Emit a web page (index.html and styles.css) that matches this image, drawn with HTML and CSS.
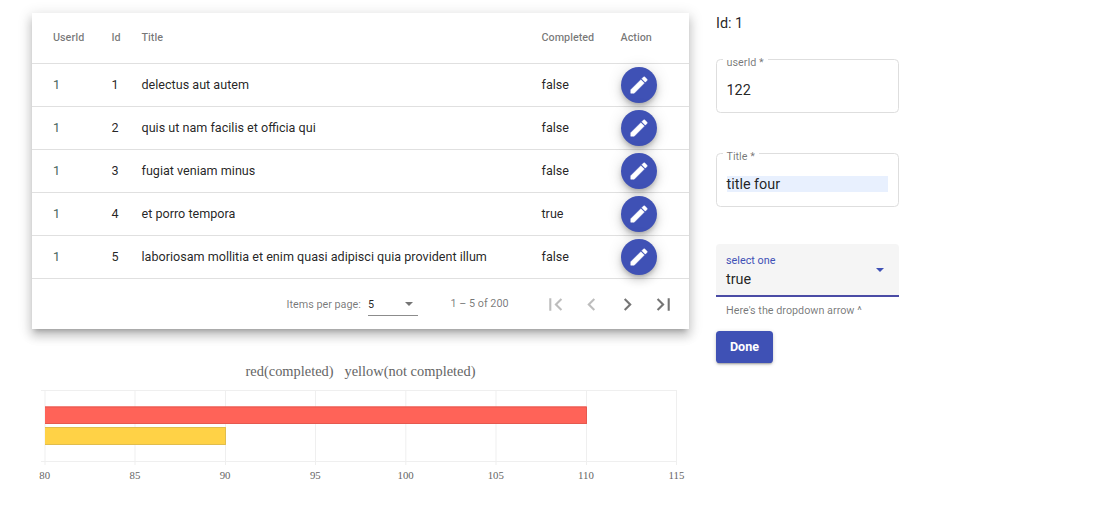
FILE: index.html
```html
<!DOCTYPE html>
<html lang="en">
<head>
<meta charset="utf-8">
<title>Todos</title>
<link rel="stylesheet" href="styles.css">
</head>
<body>
<svg class="defs" width="0" height="0">
  <symbol id="pencil" viewBox="0 0 24 24"><path d="M3 17.25V21h3.75L17.81 9.94l-3.75-3.75L3 17.25zM20.71 7.04c.39-.39.39-1.02 0-1.41l-2.34-2.34c-.39-.39-1.02-.39-1.41 0l-1.83 1.83 3.75 3.75 1.83-1.83z"/></symbol>
</svg>
<main class="page">
  <section class="left">
    <div class="card">
      <div class="row head"><span>UserId</span><span>Id</span><span>Title</span><span>Completed</span><span>Action</span></div>
      <div class="row"><span class="user">1</span><span>1</span><span>delectus aut autem</span><span>false</span><button class="fab" aria-label="Edit"><svg><use href="#pencil"/></svg></button></div>
      <div class="row"><span class="user">1</span><span>2</span><span>quis ut nam facilis et officia qui</span><span>false</span><button class="fab" aria-label="Edit"><svg><use href="#pencil"/></svg></button></div>
      <div class="row"><span class="user">1</span><span>3</span><span>fugiat veniam minus</span><span>false</span><button class="fab" aria-label="Edit"><svg><use href="#pencil"/></svg></button></div>
      <div class="row"><span class="user">1</span><span>4</span><span>et porro tempora</span><span>true</span><button class="fab" aria-label="Edit"><svg><use href="#pencil"/></svg></button></div>
      <div class="row"><span class="user">1</span><span>5</span><span>laboriosam mollitia et enim quasi adipisci quia provident illum</span><span>false</span><button class="fab" aria-label="Edit"><svg><use href="#pencil"/></svg></button></div>
      <div class="paginator">
        <span class="per-page">Items per page:</span>
        <div class="size"><span>5</span><i class="arrow"></i></div>
        <span class="range">1 – 5 of 200</span>
        <div class="nav">
          <svg class="off" viewBox="0 0 24 24"><path d="M18.41 16.59L13.82 12l4.59-4.59L17 6l-6 6 6 6zM6 6h2v12H6z"/></svg>
          <svg class="off" viewBox="0 0 24 24"><path d="M15.41 7.41L14 6l-6 6 6 6 1.41-1.41L10.83 12z"/></svg>
          <svg viewBox="0 0 24 24"><path d="M10 6L8.59 7.41 13.17 12l-4.58 4.59L10 18l6-6z"/></svg>
          <svg viewBox="0 0 24 24"><path d="M5.59 7.41L10.18 12l-4.59 4.59L7 18l6-6-6-6zM16 6h2v12h-2z"/></svg>
        </div>
      </div>
    </div>
    <svg class="chart" width="657" height="130" viewBox="32 360 657 130">
      <text class="chart-title" x="360.5" y="376" textLength="230">red(completed)&#160;&#160; yellow(not completed)</text>
      <path class="grid" d="M41 390.5H677M41 461.5H677M45 390V465M135 390V465M225.5 390V465M315.5 390V465M405.8 390V465M496 390V465M586.5 390V465M676.5 390V465"/>
      <rect x="45" y="406.5" width="542" height="17.5" fill="#ff6358"/>
      <path class="red-edge" d="M45 407H586.5V423.5H45"/>
      <rect x="45" y="427" width="181" height="18" fill="#ffd246"/>
      <path class="yellow-edge" d="M45 427.5H225.5V444.5H45"/>
      <g class="ticks"><text x="44.7" y="479">80</text><text x="134.9" y="479">85</text><text x="225.1" y="479">90</text><text x="315.3" y="479">95</text><text x="405.6" y="479">100</text><text x="495.8" y="479">105</text><text x="586" y="479">110</text><text x="676.5" y="479">115</text></g>
    </svg>
  </section>
  <form class="form">
    <div class="id-line">Id: 1</div>
    <fieldset class="outlined"><legend>userId *</legend><div class="value">122</div></fieldset>
    <fieldset class="outlined"><legend>Title *</legend><div class="value filled">title four</div></fieldset>
    <div class="select">
      <div><div class="select-label">select one</div><div class="select-value">true</div></div>
      <i class="arrow blue"></i>
    </div>
    <div class="hint">Here's the dropdown arrow ^</div>
    <button class="done" type="button">Done</button>
  </form>
</main>
</body>
</html>
```
FILE: styles.css
```css
* { box-sizing: border-box; }
body { margin: 0; background: #fff; font-family: Roboto, "Liberation Sans", sans-serif; color: rgba(0,0,0,.87); }
.defs { display: block; }
.page { display: flex; gap: 27px; padding: 13px 0 0 32px; }
.left { width: 657px; }
.card { height: 316px; background: #fff; box-shadow: 0 4.5px 4.5px -2.7px rgba(0,0,0,.2), 0 7px 9px 1px rgba(0,0,0,.14), 0 2.7px 12.6px 2px rgba(0,0,0,.12); }
.row { display: grid; grid-template-columns: 58.5px 30px 400px 79px 1fr; align-items: center; height: 43px; padding-left: 21px; border-bottom: 1px solid #e0e0e0; font-size: 12.6px; white-space: nowrap; }
.row span { padding-bottom: 2px; }
.head { height: 51px; font-size: 10.8px; font-weight: 500; color: rgba(0,0,0,.54); }
.user { color: #49655e; }
.fab { display: flex; align-items: center; justify-content: center; width: 36px; height: 36px; padding: 0; border: 0; border-radius: 50%; background: #3f51b5; box-shadow: 0 2.7px 4.5px -1px rgba(0,0,0,.2), 0 5.4px 9px rgba(0,0,0,.14), 0 1px 16px rgba(0,0,0,.12); }
.fab svg { width: 22px; height: 22px; fill: #fff; stroke: #fff; stroke-width: .5px; }
.paginator { display: flex; align-items: center; height: 50px; padding-left: 254.5px; font-size: 10.8px; color: rgba(0,0,0,.54); white-space: nowrap; }
.per-page { width: 81.5px; }
.size { display: flex; align-items: center; justify-content: space-between; width: 50px; height: 22px; margin-top: 1px; padding-right: 5px; border-bottom: 1px solid #8c8c8c; color: rgba(0,0,0,.87); }
.arrow { width: 0; height: 0; border: 4.5px solid transparent; border-top-color: #757575; border-bottom: 0; }
.range { width: 92px; margin-left: 32.5px; padding-bottom: 1px; }
.nav { display: flex; gap: 11px; }
.nav svg { width: 25px; height: 25px; fill: #757575; }
.nav .off { fill: #bdbdbd; }
.chart { display: block; margin-top: 31px; font-family: "Liberation Serif", serif; }
.chart text { fill: #656565; text-anchor: middle; }
.chart-title { font-size: 14.4px; }
.ticks { font-size: 10.8px; }
.grid { fill: none; stroke: #efefef; }
.red-edge { fill: none; stroke: #e5594f; }
.yellow-edge { fill: none; stroke: #e0bd4d; }
.form { width: 183px; }
.id-line { height: 39px; padding-top: 2px; font-size: 14.4px; line-height: 17px; }
.outlined { height: 61px; margin: 0 0 33px; padding: 0 10px 0 9.5px; border: 1px solid #dedede; border-radius: 4.5px; }
.outlined legend { height: 14px; margin-left: -4px; padding: 4px 4px 0; font-size: 10.8px; line-height: 14px; color: rgba(0,0,0,.54); }
.value { height: 16px; margin-top: 16px; font-size: 14.4px; line-height: 17px; }
.filled { background: #e8f0fe; }
.select { display: flex; align-items: center; justify-content: space-between; height: 53px; margin-top: 37px; padding: 0 15px 0 10px; border-bottom: 2px solid #4a4ba5; border-radius: 4px 4px 0 0; background: #f5f5f5; }
.select-label { margin-top: 2px; font-size: 10.8px; line-height: 17px; color: #3f51b5; }
.select-value { font-size: 14.4px; line-height: 21px; }
.blue { border-width: 4.5px 4.5px 0; border-top-color: #3f51b5; }
.hint { margin: 7px 0 14px; padding-left: 10px; font-size: 10.8px; line-height: 13px; color: rgba(0,0,0,.54); }
.done { display: block; width: 57px; height: 32px; padding: 0; border: 0; border-radius: 3.6px; background: #3f51b5; color: #fff; font: 700 12.6px/32px Roboto, sans-serif; box-shadow: 0 2px 2px -1px rgba(0,0,0,.3), 0 1px 4px rgba(0,0,0,.18); }
```
